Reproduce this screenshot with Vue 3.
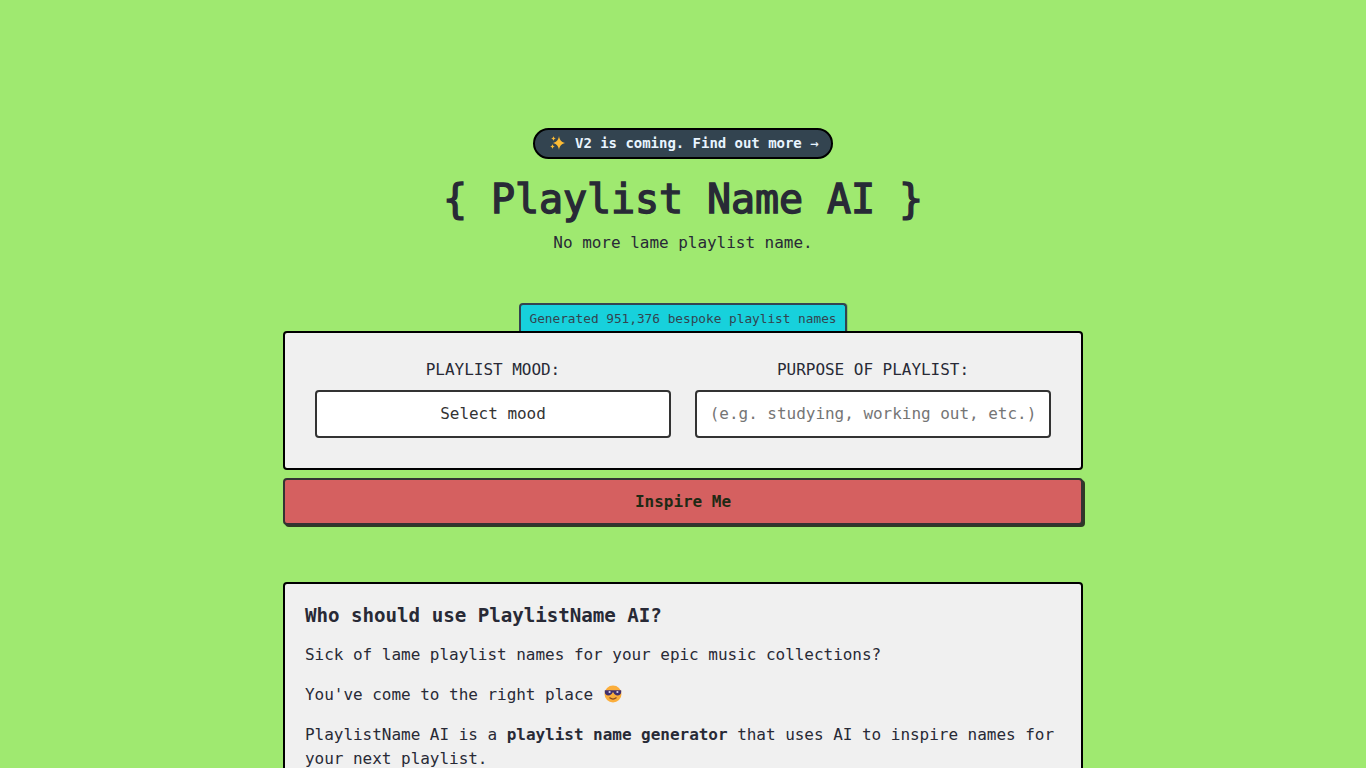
<template>
  <main class="page">
    <header class="hero">
      <a class="announce" href="#">
        <svg class="sparkles" width="17" height="17" viewBox="0 0 17 17" aria-label="sparkles">
          <path d="M10 1 C10.6 5 12 6.6 16 8 C12 9.4 10.6 11 10 15 C9.4 11 8 9.4 4 8 C8 6.6 9.4 5 10 1Z" fill="#fdbb35" />
          <path d="M4.5 1 C4.8 2.6 5.4 3.2 7 3.5 C5.4 3.8 4.8 4.4 4.5 6 C4.2 4.4 3.6 3.8 2 3.5 C3.6 3.2 4.2 2.6 4.5 1Z" fill="#fdbb35" />
          <path d="M3.5 9 C3.8 10.6 4.4 11.2 6 11.5 C4.4 11.8 3.8 12.4 3.5 14 C3.2 12.4 2.6 11.8 1 11.5 C2.6 11.2 3.2 10.6 3.5 9Z" fill="#fdbb35" />
        </svg>
        <span class="announce-text">V2 is coming. Find out more <span class="arrow">→</span></span>
      </a>
      <h1 class="title">{ Playlist Name AI }</h1>
      <p class="subtitle">No more lame playlist name.</p>
    </header>

    <section class="generator">
      <div class="counter">Generated {{ generated }} bespoke playlist names</div>
      <form class="form-card" @submit.prevent>
        <div class="field">
          <label for="mood">PLAYLIST MOOD:</label>
          <select id="mood" v-model="mood">
            <option value="">Select mood</option>
            <option v-for="m in moods" :key="m" :value="m">{{ m }}</option>
          </select>
        </div>
        <div class="field">
          <label for="purpose">PURPOSE OF PLAYLIST:</label>
          <input id="purpose" v-model="purpose" placeholder="(e.g. studying, working out, etc.)" />
        </div>
      </form>
      <button class="inspire" type="button">Inspire Me</button>
    </section>

    <article class="about">
      <h2>Who should use PlaylistName AI?</h2>
      <p>Sick of lame playlist names for your epic music collections?</p>
      <p>
        You've come to the right place
        <svg class="cool" width="20" height="20" viewBox="0 0 20 20" aria-label="smiling face with sunglasses">
          <circle cx="10" cy="10" r="8.5" fill="#fbae3c" />
          <path d="M1.8 6.2 H18.2 V8 C18.2 10.4 16.6 11.4 14.6 11.4 C12.6 11.4 11 10 10.6 8.4 H9.4 C9 10 7.4 11.4 5.4 11.4 C3.4 11.4 1.8 10.4 1.8 8Z" fill="#40306f" />
          <circle cx="6.6" cy="8" r="1.1" fill="#d9d4ea" />
          <circle cx="14.4" cy="8" r="1.1" fill="#d9d4ea" />
          <path d="M6.8 13.8 C8.6 15.2 11.4 15.2 13.2 13.8" fill="none" stroke="#8a4a20" stroke-width="1.2" stroke-linecap="round" />
        </svg>
      </p>
      <p>PlaylistName AI is a <strong>playlist name generator</strong> that uses AI to inspire names for your next playlist.</p>
    </article>
  </main>
</template>

<script setup>
import { ref } from 'vue'

const generated = '951,376'
const moods = ['Happy', 'Chill', 'Sad', 'Energetic']
const mood = ref('')
const purpose = ref('')
</script>

<style>
body {
  background: #9fe970;
}
</style>

<style scoped>
.page {
  width: 800px;
  margin: 0 auto;
  padding-top: 128px;
  font-family: "DejaVu Sans Mono", "Liberation Mono", monospace;
  font-size: 16px;
  line-height: 24px;
  color: #282a36;
}

.hero {
  display: flex;
  flex-direction: column;
  align-items: center;
}

.announce {
  box-sizing: border-box;
  height: 31px;
  width: 300px;
  padding-left: 14px;
  display: flex;
  align-items: center;
  gap: 9px;
  border: 2px solid #000;
  border-radius: 16px;
  background: #334450;
  color: #e8f4ff;
  font-size: 14px;
  font-weight: 600;
  text-decoration: none;
}

.announce-text {
  padding-bottom: 2px;
  letter-spacing: -0.03px;
  white-space: nowrap;
}

.arrow {
  font-weight: 400;
}

.title {
  margin: 16px 0 0;
  font-size: 40px;
  line-height: 48px;
  font-weight: 400;
  letter-spacing: -0.08px;
  -webkit-text-stroke: 1.4px #282a36;
}

.subtitle {
  margin: 8px 0 0;
  letter-spacing: -0.03px;
}

.generator {
  margin-top: 48px;
  display: flex;
  flex-direction: column;
  align-items: center;
}

.counter {
  box-sizing: border-box;
  height: 29px;
  padding: 2px 9px 0;
  border: 2px solid #334450;
  border-bottom: none;
  border-radius: 4px 4px 0 0;
  background: #17d1dc;
  box-shadow: 1px 0 0 #86c766;
  color: #334450;
  font-size: 12.8px;
  line-height: 24px;
  letter-spacing: -0.03px;
  white-space: nowrap;
}

.form-card {
  box-sizing: border-box;
  width: 100%;
  height: 139px;
  margin-top: -1px;
  padding: 25px 30px 0;
  display: grid;
  grid-template-columns: 1fr 1fr;
  gap: 24px;
  position: relative;
  background: #f0f0f0;
  border: 2px solid #000;
  border-radius: 4px;
}

.field {
  display: flex;
  flex-direction: column;
  align-items: stretch;
  gap: 8px;
  text-align: center;
}

.field label {
  letter-spacing: -0.03px;
}

.field select,
.field input {
  box-sizing: border-box;
  width: 100%;
  height: 48px;
  margin: 0;
  padding: 0 8px;
  appearance: none;
  background: #fff;
  border: 2px solid #333;
  border-radius: 4px;
  color: #333;
  font: inherit;
  letter-spacing: -0.03px;
  text-align: center;
  text-align-last: center;
  outline: none;
}

.field input {
  padding-bottom: 1px;
}

.field input::placeholder {
  color: #757575;
  opacity: 1;
}

.inspire {
  box-sizing: border-box;
  width: 100%;
  height: 47px;
  margin-top: 8px;
  background: #d56060;
  border: 2px solid #333;
  border-radius: 4px;
  box-shadow: 2px 2px 0 #2f3a25;
  color: #1f2a15;
  font: inherit;
  font-weight: 600;
  letter-spacing: -0.03px;
}

.about {
  box-sizing: border-box;
  margin-top: 57px;
  padding: 20px 20px 40px;
  background: #f0f0f0;
  border: 2px solid #000;
  border-radius: 4px;
}

.about h2 {
  margin: 0;
  font-size: 19.2px;
  line-height: 24px;
  font-weight: 600;
  letter-spacing: -0.04px;
}

.about h2 + p {
  margin-top: 15px;
}

.about p {
  margin: 16px 0 0;
  letter-spacing: -0.03px;
}

.cool {
  vertical-align: -4px;
}
</style>
